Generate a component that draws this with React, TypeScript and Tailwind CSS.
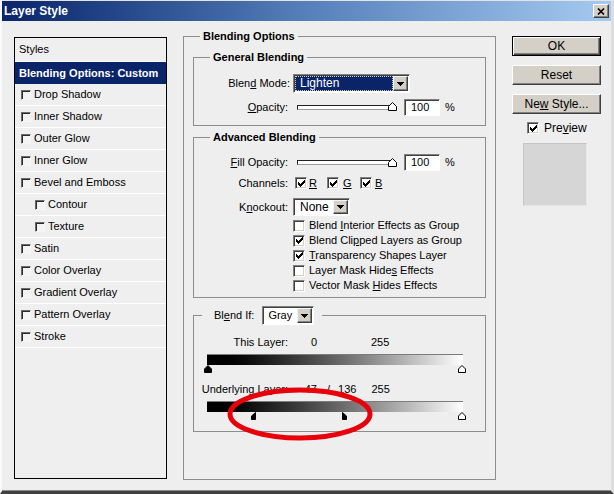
import React from "react";

const checkPixels: [number, number, number][] = [
  [6, 0, 1], [5, 1, 2], [0, 2, 1], [4, 2, 3], [0, 3, 2], [3, 3, 3], [0, 4, 5], [1, 5, 3], [2, 6, 1],
];

function CheckMark() {
  return (
    <svg viewBox="0 0 7 7" className="h-[7px] w-[7px]" shapeRendering="crispEdges">
      {checkPixels.map(([x, y, w], i) => (
        <rect key={i} x={x} y={y} width={w} height={1} fill="#000" />
      ))}
    </svg>
  );
}

function Check({ on = false }: { on?: boolean }) {
  return (
    <span className="box-border inline-flex h-[12px] w-[12px] shrink-0 items-center justify-center border border-t-[#808080] border-l-[#808080] border-r-white border-b-white bg-white shadow-[inset_1px_1px_0_#404040,inset_-1px_-1px_0_#d4d0c8]">
      {on && <CheckMark />}
    </span>
  );
}

function ListCheck() {
  return (
    <span className="box-border inline-block h-[10px] w-[10px] shrink-0 border border-t-[#6a6a6a] border-l-[#6a6a6a] border-r-[#f6f6f6] border-b-[#f6f6f6] bg-[#f4f4f4] shadow-[inset_1px_1px_0_#2a2a2a]" />
  );
}

function Arrow() {
  return (
    <svg viewBox="0 0 7 4" className="h-[4px] w-[7px]" shapeRendering="crispEdges">
      <path d="M0 0h7l-3.5 4z" fill="#000" />
    </svg>
  );
}

function DropBtn() {
  return (
    <span className="box-border flex w-[15px] shrink-0 items-center justify-center border border-t-[#f4f4f4] border-l-[#f4f4f4] border-r-[#404040] border-b-[#404040] bg-[#d4d0c8] shadow-[inset_-1px_-1px_0_#808080]">
      <Arrow />
    </span>
  );
}

function Sunken({ className, children }: { className: string; children: React.ReactNode }) {
  return (
    <div
      className={`box-border flex border border-t-[#808080] border-l-[#808080] border-r-white border-b-white bg-white p-[1px] shadow-[inset_1px_1px_0_#404040] ${className}`}
    >
      {children}
    </div>
  );
}

function Slider() {
  return (
    <div className="relative ml-[9px] flex h-[12px] w-[100px] items-center">
      <div className="box-border h-[5px] w-[97px] border border-[#202020] border-b-[#9a9a9a] border-r-[#9a9a9a] bg-white" />
      <svg viewBox="0 0 9 9" className="absolute left-[91px] top-[1px] h-[9px] w-[9px]">
        <path d="M0.5 8.5V4.5L4.5 0.5L8.5 4.5V8.5Z" fill="#fff" stroke="#000" />
      </svg>
    </div>
  );
}

function Num() {
  return (
    <>
      <Sunken className="ml-[7px] h-[17px] w-[36px] items-center">
        <span className="pl-[5px]">100</span>
      </Sunken>
      <span className="ml-[5px]">%</span>
    </>
  );
}

function Btn({ children, def = false, className = "" }: { children: React.ReactNode; def?: boolean; className?: string }) {
  return (
    <div
      className={`box-border flex h-[20px] w-[89px] items-center justify-center bg-[#d4d0c8] text-[12px] ${
        def
          ? "border border-black shadow-[inset_1px_1px_0_#fff,inset_-1px_-1px_0_#404040,inset_-2px_-2px_0_#808080]"
          : "border border-t-white border-l-white border-r-[#404040] border-b-[#404040] shadow-[inset_-1px_-1px_0_#808080]"
      } ${className}`}
    >
      {children}
    </div>
  );
}

function Thumb({ left, dark }: { left: string; dark: boolean }) {
  return (
    <svg viewBox="0 0 8 8" className={`absolute top-[11px] h-[8px] w-[8px] ${left}`}>
      <path d="M0.5 7.5V4L4 0.5L7.5 4V7.5Z" fill={dark ? "#000" : "#fff"} stroke="#000" />
    </svg>
  );
}

const styleItems: [string, boolean][] = [
  ["Drop Shadow", false],
  ["Inner Shadow", false],
  ["Outer Glow", false],
  ["Inner Glow", false],
  ["Bevel and Emboss", false],
  ["Contour", true],
  ["Texture", true],
  ["Satin", false],
  ["Color Overlay", false],
  ["Gradient Overlay", false],
  ["Pattern Overlay", false],
  ["Stroke", false],
];

export default function App() {
  return (
    <div className="relative box-border h-[494px] w-[614px] overflow-hidden border-t border-l-2 border-r-[3px] border-b-[3px] border-t-[#e4e4e4] border-l-[#fafafa] border-r-[#dedede] border-b-[#404040] bg-[#eeeeee] font-['Liberation_Sans',Arial,sans-serif] text-[11px] leading-[13px] text-black shadow-[inset_0_-1px_0_#8c8c8c]">
      {/* title bar */}
      <div className="flex h-[20px] items-center justify-between bg-linear-to-r from-[#0a246a] via-[#5680bb] to-[#a6caf0] pl-[2px] pr-[2px]">
        <span className="text-[12px] font-bold text-white">Layer Style</span>
        <span className="box-border flex h-[14px] w-[16px] items-center justify-center border border-t-white border-l-white border-r-[#404040] border-b-[#404040] bg-[#d4d0c8] shadow-[inset_-1px_-1px_0_#808080]">
          <svg viewBox="0 0 8 7" className="h-[7px] w-[8px]">
            <path d="M1 0.5L7 6.5M7 0.5L1 6.5" stroke="#000" strokeWidth="1.6" />
          </svg>
        </span>
      </div>

      <div className="flex items-start">
        {/* styles list */}
        <div className="ml-[12px] mt-[16px] box-border h-[442px] w-[153px] border border-black bg-[#efefef]">
          <div className="flex h-[24px] items-center border-b border-white pl-[4px]">Styles</div>
          <div className="flex h-[22px] items-center bg-[#0a246a] pl-[4px] font-bold text-white">
            Blending Options: Custom
          </div>
          {styleItems.map(([name, indent]) => (
            <div
              key={name}
              className={`box-border flex h-[22px] items-center gap-[2px] border-b border-white ${indent ? "pl-[20px]" : "pl-[6px]"}`}
            >
              <ListCheck />
              <span className="ml-[1px]">{name}</span>
            </div>
          ))}
        </div>

        {/* blending options */}
        <fieldset className="ml-[16px] mt-[9px] box-border h-[450px] w-[313px] border border-[#8d8d8d]">
          <legend className="ml-[16px] px-[3px] font-bold">Blending Options</legend>

          <fieldset className="mx-[9px] mt-[8px] border border-[#8d8d8d] pb-[9px]">
            <legend className="ml-[16px] px-[3px] font-bold">General Blending</legend>
            <div className="mt-[10px] flex h-[19px] items-center">
              <span className="w-[96px] text-right">
                Blen<u>d</u> Mode:
              </span>
              <Sunken className="ml-[3px] h-[19px] w-[117px]">
                <div className="flex flex-1 items-center bg-[#0a246a]">
                  <span className="box-border flex h-full flex-1 items-center border border-dotted border-[#d8cfa0] pl-[4px] text-[12px] text-white">
                    Lighten
                  </span>
                </div>
                <DropBtn />
              </Sunken>
            </div>
            <div className="mt-[5px] flex h-[18px] items-center">
              <span className="w-[94px] text-right">
                <u>O</u>pacity:
              </span>
              <Slider />
              <Num />
            </div>
          </fieldset>

          <fieldset className="mx-[9px] mt-[5px] border border-[#8d8d8d] pb-[4px]">
            <legend className="ml-[16px] px-[3px] font-bold">Advanced Blending</legend>
            <div className="mt-[10px] flex h-[17px] items-center">
              <span className="w-[94px] text-right">
                <u>F</u>ill Opacity:
              </span>
              <Slider />
              <Num />
            </div>
            <div className="mt-[4px] flex h-[16px] items-center">
              <span className="w-[94px] text-right">Channels:</span>
              <div className="ml-[7px] flex w-[32px] items-center gap-[2px]">
                <Check on />
                <u>R</u>
              </div>
              <div className="flex w-[33px] items-center gap-[4px]">
                <Check on />
                <u>G</u>
              </div>
              <div className="flex items-center gap-[3px]">
                <Check on />
                <u>B</u>
              </div>
            </div>
            <div className="mt-[7px] flex h-[18px] items-center">
              <span className="w-[94px] text-right">
                K<u>n</u>ockout:
              </span>
              <Sunken className="ml-[5px] h-[18px] w-[57px]">
                <span className="flex flex-1 items-center pl-[5px] text-[12px]">None</span>
                <DropBtn />
              </Sunken>
            </div>
            <div className="mt-[2px] flex flex-col pl-[99px]">
              {[
                [false, <>Blend <u>I</u>nterior Effects as Group</>],
                [true, <>Blend Cli<u>p</u>ped Layers as Group</>],
                [true, <><u>T</u>ransparency Shapes Layer</>],
                [false, <>Layer Mask Hide<u>s</u> Effects</>],
                [false, <>Vector Mask <u>H</u>ides Effects</>],
              ].map(([on, label], i) => (
                <div key={i} className="flex h-[15px] items-center gap-[4px]">
                  <Check on={on as boolean} />
                  <span>{label as React.ReactNode}</span>
                </div>
              ))}
            </div>
          </fieldset>

          <fieldset className="mx-[9px] mt-[8px] border border-[#8d8d8d] pb-[10px]">
            <legend className="ml-[8px] pl-[12px] pr-[8px]">
              <div className="flex h-[19px] items-center">
                <span>
                  Bl<u>e</u>nd If:
                </span>
                <Sunken className="ml-[8px] h-[19px] w-[52px]">
                  <span className="flex flex-1 items-center pl-[4px]">Gray</span>
                  <DropBtn />
                </Sunken>
              </div>
            </legend>

            <div className="mt-[10px] flex h-[14px] items-center">
              <span className="w-[94px] text-right">This Layer:</span>
              <span className="w-[29px] text-right">0</span>
              <span className="ml-[54px]">255</span>
            </div>
            <div className="relative ml-[13px] mt-[5px] h-[20px] w-[256px]">
              <div className="box-border h-[11px] border-t border-[#7c7c7c] bg-linear-to-r from-black to-white" />
              <Thumb left="left-[-3px]" dark />
              <Thumb left="left-[251px]" dark={false} />
            </div>

            <div className="mt-[8px] flex h-[14px] items-center">
              <span className="w-[94px] text-right">Underlying Layer:</span>
              <span className="w-[29px] text-right">47</span>
              <span className="ml-[10px]">/</span>
              <span className="ml-[8px]">136</span>
              <span className="ml-[15px]">255</span>
            </div>
            <div className="relative ml-[13px] mt-[5px] h-[20px] w-[256px]">
              <div className="box-border h-[11px] border-t border-[#7c7c7c] bg-linear-to-r from-black to-white" />
              <svg viewBox="0 0 5 8" className="absolute left-[44px] top-[11px] h-[8px] w-[5px]">
                <path d="M4.5 0.5V7.5H0.5V4Z" fill="#000" stroke="#000" />
              </svg>
              <svg viewBox="0 0 5 8" className="absolute left-[135px] top-[11px] h-[8px] w-[5px]">
                <path d="M0.5 0.5V7.5H4.5V4Z" fill="#000" stroke="#000" />
              </svg>
              <Thumb left="left-[251px]" dark={false} />
            </div>
          </fieldset>
        </fieldset>

        {/* buttons */}
        <div className="ml-[16px] mt-[15px] flex w-[89px] flex-col">
          <Btn def>OK</Btn>
          <Btn className="mt-[9px]">Reset</Btn>
          <Btn className="mt-[9px]">
            Ne<u>w</u>&nbsp;Style...
          </Btn>
          <div className="mt-[7px] flex h-[14px] items-center gap-[5px] pl-[15px] text-[12px]">
            <Check on />
            <span>
              Pre<u>v</u>iew
            </span>
          </div>
          <div className="ml-[11px] mt-[8px] box-border h-[63px] w-[64px] border border-[#c6c6c6] border-b-[#e6e6e6] border-r-[#e6e6e6] bg-[#d6d6d6]" />
        </div>
      </div>

      {/* red annotation */}
      <svg className="pointer-events-none absolute left-0 top-0 h-[494px] w-[614px]" viewBox="0 0 614 494">
        <ellipse cx="298" cy="413" rx="70" ry="24" fill="none" stroke="#e8000b" strokeWidth="5" />
      </svg>
    </div>
  );
}
